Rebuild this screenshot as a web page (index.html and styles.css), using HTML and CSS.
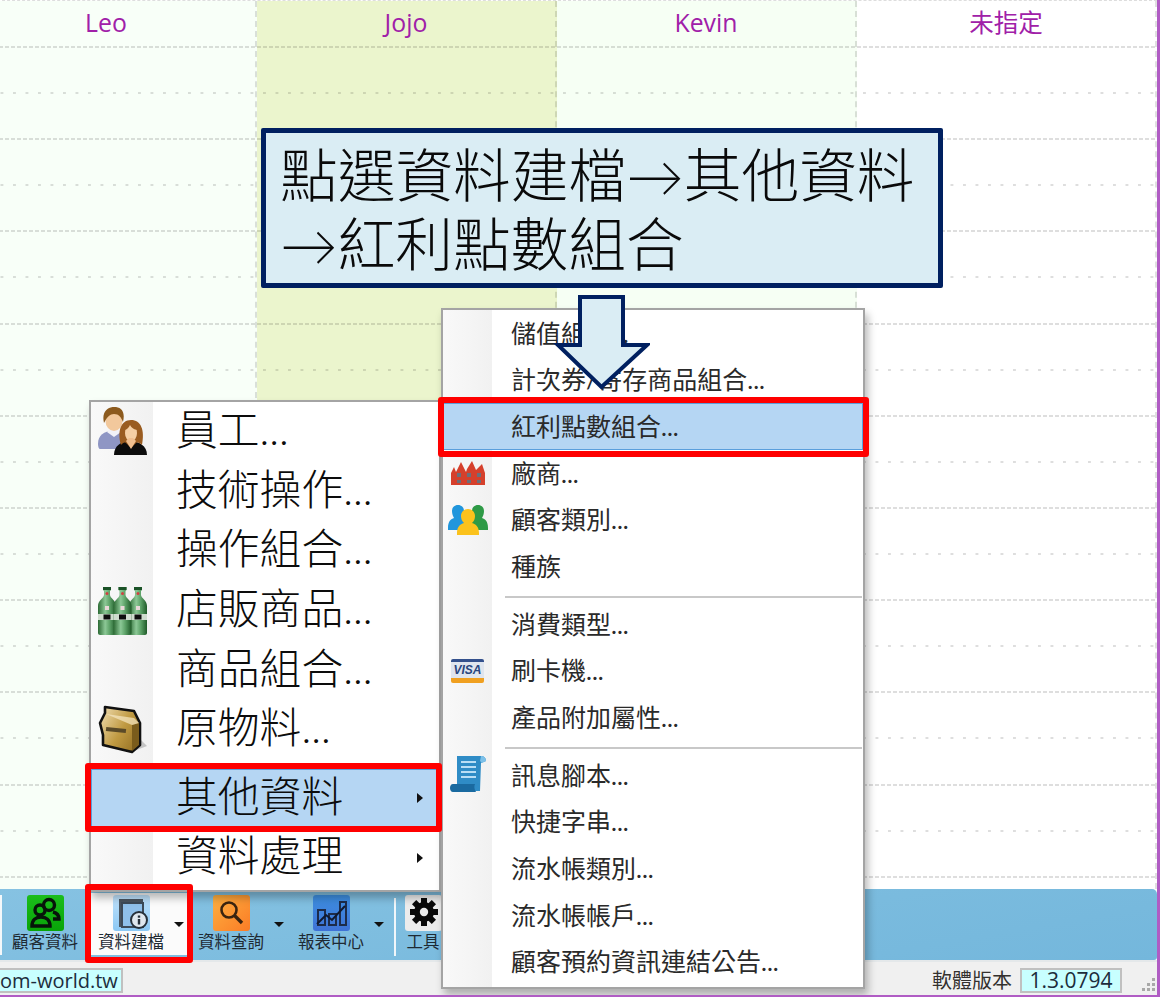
FILE: index.html
```html
<!DOCTYPE html>
<html lang="zh-Hant">
  <head>
    <meta charset="UTF-8" />
    <meta name="viewport" content="width=device-width, initial-scale=1.0" />
    <title>資料建檔</title>
    <link rel="stylesheet" href="styles.css">
  </head>
  <body>
    <div class="app">
      <!-- Schedule columns, the slots are filled by script.js -->
      <div class="schedule">
        <div class="staff-col col-leo"><div class="staff-name">Leo</div><div class="slots"></div></div>
        <div class="staff-col col-jojo"><div class="staff-name">Jojo</div><div class="slots"></div></div>
        <div class="staff-col col-kevin"><div class="staff-name">Kevin</div><div class="slots"></div></div>
        <div class="staff-col col-none"><div class="staff-name cjk">未指定</div><div class="slots"></div></div>
      </div>

      <div class="toolbar">
        <div class="tool-sliver"></div>
        <div class="tool tool-plain">
          <div class="tool-main">
            <div class="tile tile-green">
              <svg viewBox="0 0 37 36" width="37" height="36">
                <g fill="none" stroke="#07140a" stroke-width="3.4">
                  <circle cx="22" cy="10" r="5.5" />
                  <circle cx="13" cy="15" r="5" />
                  <path d="M26 17c4 1 6 3 6 7h-6" />
                  <path d="M5 31c0-6 4-9 9-9s9 3 9 9z" />
                </g>
              </svg>
            </div>
            <span class="tool-label">顧客資料</span>
          </div>
        </div>
        <div class="tool tool-active">
          <div class="tool-main">
            <div class="tile tile-sky">
              <svg viewBox="0 0 37 36" width="37" height="36">
                <path d="M6 4h24v5H9v23H6z" fill="#4a5560" />
                <rect x="9" y="8" width="21" height="24" fill="#8fc0ea" stroke="#3d4a58" stroke-width="2" />
                <circle cx="26" cy="25" r="8" fill="#dfe7ee" stroke="#26303a" stroke-width="2" />
                <rect x="24.8" y="24" width="2.4" height="5.5" fill="#26303a" />
                <rect x="24.8" y="20.5" width="2.4" height="2.2" fill="#26303a" />
              </svg>
            </div>
            <span class="tool-label">資料建檔</span>
          </div>
          <i class="drop"></i>
        </div>
        <div class="tool">
          <div class="tool-main">
            <div class="tile tile-orange">
              <svg viewBox="0 0 37 36" width="37" height="36">
                <circle cx="16" cy="15" r="7.5" fill="none" stroke="#3a2410" stroke-width="2.6" />
                <path d="M21.5 20.5 29 28" stroke="#3a2410" stroke-width="3.4" />
              </svg>
            </div>
            <span class="tool-label">資料查詢</span>
          </div>
          <i class="drop"></i>
        </div>
        <div class="tool">
          <div class="tool-main">
            <div class="tile tile-blue">
              <svg viewBox="0 0 37 36" width="37" height="36">
                <g fill="none" stroke="#1d2c4a" stroke-width="2">
                  <rect x="5" y="15" width="7" height="15" />
                  <rect x="16" y="19" width="7" height="11" />
                  <rect x="27" y="7" width="6" height="23" />
                </g>
                <path d="M4 29 13 20l6 5 13-14" fill="none" stroke="#101a30" stroke-width="2" />
              </svg>
            </div>
            <span class="tool-label">報表中心</span>
          </div>
          <i class="drop"></i>
        </div>
        <div class="tool-sep"></div>
        <div class="tool tool-plain tool-small">
          <div class="tool-main">
            <div class="tile tile-gray">
              <svg viewBox="0 0 37 36" width="37" height="36">
                <g fill="#0a0a0a" transform="translate(19 17)">
                  <circle r="10" />
                  <rect x="-3" y="-14" width="6" height="28" />
                  <rect x="-3" y="-14" width="6" height="28" transform="rotate(45)" />
                  <rect x="-3" y="-14" width="6" height="28" transform="rotate(90)" />
                  <rect x="-3" y="-14" width="6" height="28" transform="rotate(135)" />
                  <circle r="4.2" fill="#ececec" />
                </g>
              </svg>
            </div>
            <span class="tool-label">工具</span>
          </div>
        </div>
      </div>

      <div class="statusbar">
        <div class="field field-site">om-world.tw</div>
        <div class="status-right">
          <span class="status-label">軟體版本</span>
          <div class="field field-version">1.3.0794</div>
          <svg class="grip" viewBox="0 0 14 14" width="14" height="14">
            <g fill="#a8a8a8">
              <rect x="10" y="1" width="3" height="3" />
              <rect x="5" y="6" width="3" height="3" />
              <rect x="10" y="6" width="3" height="3" />
              <rect x="0" y="11" width="3" height="3" />
              <rect x="5" y="11" width="3" height="3" />
              <rect x="10" y="11" width="3" height="3" />
            </g>
          </svg>
        </div>
      </div>

      <!-- Main popup menu -->
      <div class="menu menu-main">
        <div class="item">
          <span class="item-icon">
            <svg viewBox="0 0 50 50" width="50" height="50">
              <path d="M0 37c0-9 6-13 15-13s16 4 16 13v5H2c-1 0-2-2-2-5z" fill="#8f96c4" />
              <path d="M9 25l7 5 7-5-3-3h-8z" fill="#f2f2f8" />
              <ellipse cx="16" cy="14" rx="8.5" ry="10" fill="#f2c89c" />
              <path d="M6 16C3 4 11-1 18 0c7 1 9 7 7 15-2-5-4-8-9-8-4 0-7 3-10 9z" fill="#8c5a1e" />
              <path d="M16 48c0-9 7-14 16-14s17 5 17 14z" fill="#0c0c0c" />
              <path d="M23 38C19 24 23 13 33 13s14 10 11 25c-2-2-4-3-6-2l-5 5-5-5c-2-1-3 0-5 2z" fill="#9a5c20" />
              <ellipse cx="33" cy="26" rx="6" ry="8.5" fill="#f5cfa4" />
              <path d="M28 34l5 8 5-8-3-3h-4z" fill="#f0bf90" />
              <path d="M26 23c2-5 5-8 8-8 4 0 6 3 6 8-4 0-7-3-8-5-1 2-3 5-6 5z" fill="#9a5c20" />
            </svg>
          </span>
          <span class="item-text">員工...</span>
        </div>
        <div class="item"><span class="item-icon"></span><span class="item-text">技術操作...</span></div>
        <div class="item"><span class="item-icon"></span><span class="item-text">操作組合...</span></div>
        <div class="item">
          <span class="item-icon">
            <svg viewBox="0 0 50 50" width="50" height="50">
              <defs>
                <linearGradient id="glass" x1="0" x2="1" y1="0" y2="0">
                  <stop offset="0" stop-color="#2c6a34" />
                  <stop offset=".4" stop-color="#8cc896" />
                  <stop offset=".65" stop-color="#5da268" />
                  <stop offset="1" stop-color="#1f5a28" />
                </linearGradient>
                <g id="bottle">
                  <path d="M5 1h8v3l-1 1v4c0 3 6 5 6 11v27c0 1-1 2-2 2H2c-1 0-2-1-2-2V20c0-6 6-8 6-11V5L5 4z" fill="url(#glass)" />
                  <rect x="5" y="1" width="8" height="3" fill="#1a5226" />
                  <circle cx="9" cy="7.5" r="1.5" fill="#d04040" />
                  <rect x="0" y="28" width="18" height="6" fill="#cfdcce" />
                  <rect x="5.5" y="28.5" width="7" height="5" fill="#0e0e0e" />
                  <rect x="7" y="20" width="4" height="4" fill="#e8d8d8" />
                </g>
              </defs>
              <use href="#bottle" x="0" />
              <use href="#bottle" x="31" />
              <use href="#bottle" x="15.5" />
            </svg>
          </span>
          <span class="item-text">店販商品...</span>
        </div>
        <div class="item"><span class="item-icon"></span><span class="item-text">商品組合...</span></div>
        <div class="item">
          <span class="item-icon">
            <svg viewBox="0 0 50 50" width="50" height="50">
              <defs>
                <linearGradient id="paper" x1="0" x2="1" y1="0" y2=".7">
                  <stop offset="0" stop-color="#f2e0b6" />
                  <stop offset=".6" stop-color="#c09a42" />
                  <stop offset="1" stop-color="#9a7628" />
                </linearGradient>
              </defs>
              <path d="M36 46l13-5-8-8z" fill="#c4c4c4" />
              <path d="M7 2 36 6 42 18V40L34 47 5 40V30L2 18 7 8z" fill="url(#paper)" stroke="#111" stroke-width="2.6" stroke-linejoin="round" />
              <path d="M34 46V20l7-2v22z" fill="#7a5c1c" />
              <path d="M8 9l28 4 5 5-7 2z" fill="#f6e8c4" opacity=".7" />
              <rect x="8" y="23" width="20" height="4" fill="#5a4a28" transform="rotate(6 18 25)" />
            </svg>
          </span>
          <span class="item-text">原物料...</span>
        </div>
        <div class="item item-spaced item-on"><span class="item-icon"></span><span class="item-text">其他資料</span><i class="more"></i></div>
        <div class="item"><span class="item-icon"></span><span class="item-text">資料處理</span><i class="more"></i></div>
      </div>

      <!-- Sub menu of 其他資料 -->
      <div class="menu menu-sub">
        <div class="item"><span class="item-icon"></span><span class="item-text">儲值組合...</span></div>
        <div class="item"><span class="item-icon"></span><span class="item-text">計次券/寄存商品組合...</span></div>
        <div class="item item-on"><span class="item-icon"></span><span class="item-text">紅利點數組合...</span></div>
        <div class="item">
          <span class="item-icon">
            <svg viewBox="0 0 36 26" width="36" height="26">
              <path d="M1 25V13l3-6 2 5 5-10 5 10 1-3 5-8 4 9 6-6 3 9v12z" fill="#d5402c" />
              <g fill="#6b6f7a">
                <rect x="7" y="13" width="4" height="4" /><rect x="17" y="13" width="4" height="4" /><rect x="27" y="13" width="4" height="4" />
                <rect x="7" y="20" width="4" height="3" /><rect x="17" y="20" width="4" height="3" /><rect x="27" y="20" width="4" height="3" />
              </g>
            </svg>
          </span>
          <span class="item-text">廠商...</span>
        </div>
        <div class="item">
          <span class="item-icon">
            <svg viewBox="0 0 40 30" width="40" height="30">
              <path d="M10 0c4 0 6 3 6 6 0 3-1 5-2 7 3 1 6 3 6 10v2H0v-2c0-7 3-9 6-10C5 11 4 9 4 6c0-3 2-6 6-6z" fill="#2196dc" />
              <path d="M30 0c4 0 6 3 6 6 0 3-1 5-2 7 3 1 6 3 6 10v2H20v-2c0-7 3-9 6-10-1-2-2-4-2-7 0-3 2-6 6-6z" fill="#2e9a46" />
              <path d="M20 4c4 0 7 3 7 7 0 3-1 5-3 7 4 1 7 4 7 10v2H9v-2c0-6 3-9 7-10-2-2-3-4-3-7 0-4 3-7 7-7z" fill="#fbc21c" />
            </svg>
          </span>
          <span class="item-text">顧客類別...</span>
        </div>
        <div class="item"><span class="item-icon"></span><span class="item-text">種族</span></div>
        <div class="menu-sep"></div>
        <div class="item"><span class="item-icon"></span><span class="item-text">消費類型...</span></div>
        <div class="item">
          <span class="item-icon">
            <span class="visa-card">VISA</span>
          </span>
          <span class="item-text">刷卡機...</span>
        </div>
        <div class="item"><span class="item-icon"></span><span class="item-text">產品附加屬性...</span></div>
        <div class="menu-sep"></div>
        <div class="item">
          <span class="item-icon item-icon-up">
            <svg viewBox="0 0 38 38" width="38" height="38">
              <path d="M8 1h24c3 0 5 2 5 5l-5 2-1 28H2c2-2 5-3 6-6z" fill="#2f8cc6" />
              <path d="M1 33c0-2 1-4 3-4h22c-1 2-1 5 1 8H4c-2 0-3-2-3-4z" fill="#1a6aa0" />
              <path d="M32 1c3 0 5 2 5 5l-4 2-2-2z" fill="#7cc0e8" />
              <path d="M12 7h15M12 12h15M12 17h15M12 22h15" stroke="#b9def5" stroke-width="2" />
            </svg>
          </span>
          <span class="item-text">訊息腳本...</span>
        </div>
        <div class="item"><span class="item-icon"></span><span class="item-text">快捷字串...</span></div>
        <div class="item"><span class="item-icon"></span><span class="item-text">流水帳類別...</span></div>
        <div class="item"><span class="item-icon"></span><span class="item-text">流水帳帳戶...</span></div>
        <div class="item"><span class="item-icon"></span><span class="item-text">顧客預約資訊連結公告...</span></div>
      </div>

      <!-- Annotations drawn over the screenshot -->
      <div class="callout">點選資料建檔→其他資料<br />→紅利點數組合</div>
      <svg class="hint-arrow" viewBox="0 0 100 100" width="100" height="100">
        <path d="M30 5H73V53H97L51.5 95 8 53H30z" fill="#daedf4" stroke="#002060" stroke-width="4" />
      </svg>
      <div class="mark mark-bonus"></div>
      <div class="mark mark-other"></div>
      <div class="mark mark-tool"></div>
    </div>
    <script src="script.js"></script>
  </body>
</html>
```

FILE: styles.css
```css
body {
  margin: 0;
  background-color: #fff;
  font-family: Lato, "Noto Sans CJK TC", sans-serif;
}

.app {
  position: relative;
  width: 1160px;
  height: 997px;
  box-sizing: border-box;
  display: flex;
  flex-direction: column;
  overflow: hidden;
  border-right: 3px solid #b05cc4;
  border-bottom: 2px solid #b05cc4;
}

/* schedule */
.schedule {
  height: 889px;
  display: flex;
  margin-left: -43px;
  overflow: hidden;
  border-top: 1px dashed #ddd;
  box-sizing: border-box;
}

.staff-col {
  width: 300px;
  flex: none;
  box-sizing: border-box;
  border-right: 2px dashed rgba(0, 0, 0, 0.12);
}

.col-leo {
  background-color: #f8fff8;
}

.col-jojo {
  background-color: #ebf5cd;
}

.col-kevin {
  background-color: #f6fff4;
}

.col-none {
  background-color: #fff;
}

.staff-name {
  height: 47px;
  box-sizing: border-box;
  padding-top: 3px;
  text-align: center;
  font-family: "Open Sans", sans-serif;
  font-size: 24.8px;
  line-height: 36px;
  color: #a020a8;
  background: linear-gradient(to right, rgba(0, 0, 0, 0.13) 4px, transparent 4px) left bottom / 6px 2px repeat-x;
}

.staff-name.cjk {
  font-family: "Noto Sans CJK TC", sans-serif;
  font-size: 24.5px;
}

.slot {
  height: 46.1px;
  box-sizing: border-box;
  background: linear-gradient(to right, rgba(0, 0, 0, 0.13) 4px, transparent 4px) left bottom / 6px 2px repeat-x;
}

.slot:nth-child(odd) {
  background: linear-gradient(to right, rgba(0, 0, 0, 0.13) 2.5px, transparent 2.5px) 6px bottom / 12.5px 2px repeat-x;
}

/* toolbar */
.toolbar {
  height: 71px;
  display: flex;
  align-items: flex-start;
  padding-top: 4px;
  box-sizing: border-box;
  background: linear-gradient(170deg, #86c2e2, #7abbde 60%, #74b7dc);
  border-top-right-radius: 5px;
  border-bottom-right-radius: 3px;
}

.tool-sliver {
  width: 2px;
  height: 60px;
  margin: 2px 3px 0 0;
  background-color: #f4f8fa;
}

.tool {
  width: 96px;
  height: 62px;
  margin-right: 4px;
  display: flex;
  flex: none;
}

.tool-plain {
  width: 80px;
  margin-right: 6px;
}

.tool-small {
  width: 40px;
}

.tool-active {
  background-color: #fbfbfb;
}

.tool-main {
  width: 80px;
  display: flex;
  flex-direction: column;
  align-items: center;
  padding-top: 2px;
}

.tile {
  width: 37px;
  height: 36px;
  border-radius: 3px;
}

.tile svg {
  display: block;
}

.tile-green {
  background: linear-gradient(#1bbd1b, #08a408);
}

.tile-sky {
  background: linear-gradient(#c0e2fb, #8cc8f4);
}

.tile-orange {
  background: linear-gradient(135deg, #fdb040, #fb7c26);
}

.tile-blue {
  background: linear-gradient(#3d8fe0, #3f73d6);
}

.tile-gray {
  background-color: #ececec;
}

.tool-label {
  margin-top: -1px;
  font-size: 16.5px;
  line-height: 24px;
  white-space: nowrap;
  color: #1e2a33;
}

.drop {
  width: 0;
  height: 0;
  margin: 29px 0 0 3px;
  border-left: 5px solid transparent;
  border-right: 5px solid transparent;
  border-top: 5px solid #111;
}

.tool-sep {
  width: 2px;
  height: 58px;
  margin: 5px 7px 0 3px;
  flex: none;
  background-color: #f0f6fa;
}

/* status bar */
.statusbar {
  height: 35px;
  display: flex;
  justify-content: space-between;
  align-items: flex-start;
  box-sizing: border-box;
  padding-top: 6px;
  background-color: #f0f0f0;
  border-top: 2px solid #e4e8ea;
}

.field {
  height: 25px;
  box-sizing: border-box;
  border: 2px solid #c0c0c0;
  background-color: #c8ffff;
  font-family: "Open Sans", sans-serif;
  font-size: 21px;
  line-height: 21px;
  color: #1c2c3c;
  white-space: nowrap;
  text-align: center;
}

.field-site {
  width: 125px;
  margin-left: -2px;
  font-size: 20px;
  text-align: left;
}

.field-version {
  width: 102px;
  margin-left: 8px;
}

.status-right {
  display: flex;
  align-items: flex-start;
}

.status-label {
  font-size: 20px;
  line-height: 25px;
  color: #33302e;
}

.grip {
  margin: 9px 1px 0 20px;
}

/* popup menus */
.menu {
  position: absolute;
  box-sizing: border-box;
  border: 2px solid #a4a4a4;
  color: #1d1d1d;
  background-color: #fff;
  box-shadow: 3px 6px 8px rgba(0, 0, 0, 0.28);
}

.menu-main {
  left: 89px;
  top: 400px;
  width: 352px;
  height: 492px;
  background: linear-gradient(to right, #f9f9f9, #f1f1f1 62px, #fff 62px);
  font-size: 41.8px;
  font-weight: 300;
  line-height: 60px;
  color: #0c0c0c;
}

.menu-sub {
  left: 441px;
  top: 308px;
  width: 424px;
  height: 681px;
  background: linear-gradient(to right, #f9f9f9, #f1f1f1 49px, #fff 49px);
  font-size: 25px;
  line-height: 46.6px;
  color: #2a2a2a;
}

.item {
  display: flex;
  align-items: center;
  white-space: nowrap;
}

.menu-main .item {
  height: 59.6px;
}

.menu-main .item-text {
  padding-bottom: 5px;
}

.menu-sub .item {
  height: 46.7px;
}

.menu-sub .item-text {
  padding-bottom: 1px;
}

.item-spaced {
  margin-top: 9px;
}

.item-on {
  background-color: #b5d6f3;
  box-shadow: inset 0 0 0 1px #5a9fdc;
}

.item-icon {
  flex: none;
  display: flex;
  align-items: center;
  justify-content: center;
}

.menu-main .item-icon {
  width: 62px;
  height: 50px;
  margin-right: 23px;
  padding-left: 2px;
  box-sizing: border-box;
}

.menu-sub .item-icon {
  width: 49px;
  margin-right: 19px;
}

.menu-sub .item-icon svg {
  display: block;
}

.item-icon-up {
  transform: translateY(-2px);
}

.visa-card {
  width: 33px;
  height: 24px;
  box-sizing: border-box;
  border-top: 3px solid #33508c;
  border-bottom: 5px solid #f0a020;
  border-radius: 2px;
  background-color: #dfe5ee;
  font-family: "Liberation Sans", sans-serif;
  font-size: 12px;
  font-weight: bold;
  font-style: italic;
  line-height: 16px;
  text-align: center;
  color: #28467f;
}

.more {
  width: 0;
  height: 0;
  margin-left: auto;
  margin-right: 16px;
  border-top: 5px solid transparent;
  border-bottom: 5px solid transparent;
  border-left: 6px solid #111;
}

.menu-sep {
  height: 2px;
  margin: 6px 1px 3px 62px;
  background-color: #c8c8c8;
}

/* annotations */
.callout {
  position: absolute;
  left: 261px;
  top: 128px;
  width: 682px;
  height: 160px;
  box-sizing: border-box;
  padding: 7px 14px;
  border: 5px solid #002060;
  border-radius: 2px;
  background-color: #daedf4;
  font-size: 57.7px;
  font-weight: 300;
  line-height: 69px;
  white-space: nowrap;
  color: #0a0a0a;
}

.hint-arrow {
  position: absolute;
  left: 550px;
  top: 292px;
}

.mark {
  position: absolute;
  box-sizing: border-box;
  border: 6px solid #f00;
  border-radius: 3px;
}

.mark-bonus {
  left: 438px;
  top: 397px;
  width: 431px;
  height: 60px;
}

.mark-other {
  left: 85px;
  top: 763px;
  width: 357px;
  height: 69px;
}

.mark-tool {
  left: 85px;
  top: 884px;
  width: 108px;
  height: 79px;
}
```

FILE: script.js
```js
// Fill every staff column with its time slots
document.querySelectorAll('.slots').forEach(function (col) {
  for (var i = 0; i < 18; i++) {
    var slot = document.createElement('div')
    slot.className = 'slot'
    col.appendChild(slot)
  }
})
```
